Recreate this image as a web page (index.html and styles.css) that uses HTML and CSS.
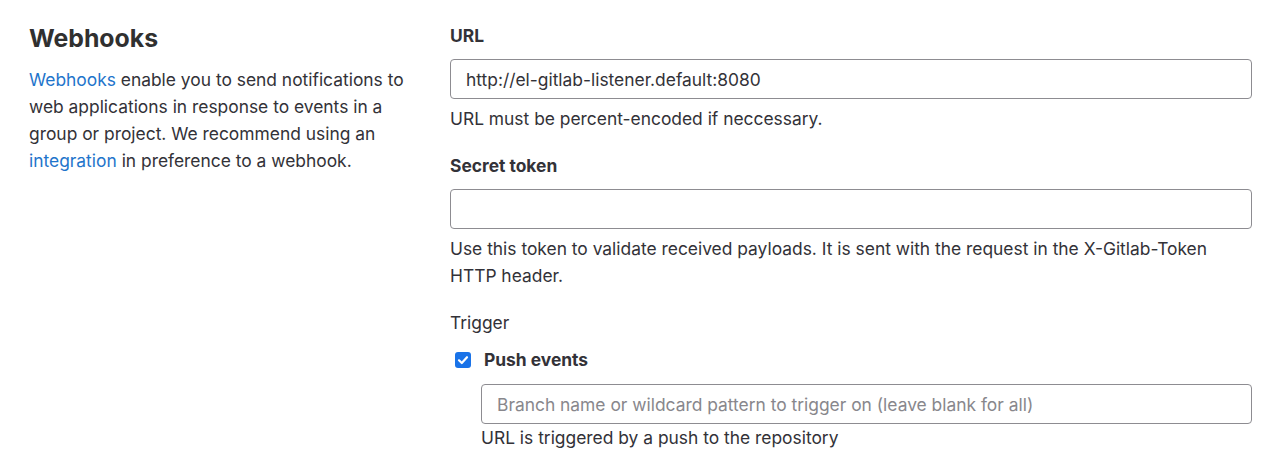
FILE: index.html
```html
<!DOCTYPE html>
<html lang="en">
<head>
<meta charset="utf-8">
<title>Webhooks</title>
<link rel="stylesheet" href="styles.css">
</head>
<body>
<div class="page">
  <section class="intro">
    <h2 class="title">Webhooks</h2>
    <p class="desc"><a href="#" class="link">Webhooks</a> enable you to send notifications to web applications in response to events in a group or project. We recommend using an <a href="#" class="link">integration</a> in preference to a webhook.</p>
  </section>
  <form class="form">
    <div class="group">
      <label class="label">URL</label>
      <div class="input"><span class="value">http://el-gitlab-listener.default:8080</span></div>
      <p class="help">URL must be percent-encoded if neccessary.</p>
    </div>
    <div class="group">
      <label class="label">Secret token</label>
      <div class="input"></div>
      <p class="help help-wrap">Use this token to validate received payloads. It is sent with the request in the X-Gitlab-Token HTTP header.</p>
    </div>
    <div class="group trigger">
      <div class="trigger-title">Trigger</div>
      <div class="check-row">
        <span class="checkbox"><svg width="16" height="16" viewBox="0 0 16 16"><path d="M4 8.3 L6.8 11 L12 5.2" fill="none" stroke="#fff" stroke-width="2.2" stroke-linecap="round" stroke-linejoin="round"/></svg></span>
        <span class="check-label">Push events</span>
      </div>
      <div class="sub">
        <div class="input"><span class="placeholder">Branch name or wildcard pattern to trigger on (leave blank for all)</span></div>
        <p class="help help-tight">URL is triggered by a push to the repository</p>
      </div>
    </div>
  </form>
</div>
</body>
</html>
```
FILE: styles.css
```css
* { box-sizing: border-box; }
html, body { margin: 0; padding: 0; background: #fff; }
body {
  font-family: Inter, "Liberation Sans", Arial, sans-serif;
  color: #333238;
  font-size: 17.4px;
}
.page {
  display: grid;
  grid-template-columns: 390px 803px;
  column-gap: 30px;
  padding: 20px 0 0 29px;
}
.title {
  margin: 0;
  font-size: 24.8px;
  line-height: 36px;
  font-weight: 700;
  color: #303030;
}
.desc {
  margin: 10px 0 0;
  line-height: 27px;
}
.link { color: #1f75cb; text-decoration: none; }
.form { padding-top: 3px; padding-left: 1px; }
.group { display: flex; flex-direction: column; }
.group + .group { margin-top: 21px; }
.label, .check-label {
  font-weight: 700;
  line-height: 26px;
}
.label { margin-bottom: 10px; }
.input {
  height: 40px;
  border: 1px solid #8d8c91;
  border-radius: 4px;
  display: flex;
  align-items: center;
  padding: 0 15px;
}
.value { color: #333238; }
.placeholder { color: #88878c; }
.help { margin: 7px 0 0; line-height: 26px; }
.help-wrap { margin-top: 6px; line-height: 27px; }
.help-tight { margin-top: 1px; }
.trigger { margin-top: 21px; }
.trigger-title { line-height: 26px; }
.check-row {
  display: flex;
  align-items: center;
  gap: 13px;
  margin: 11px 0 11px 5px;
}
.checkbox {
  width: 16px;
  height: 16px;
  border-radius: 3px;
  background: #1a73e8;
  display: flex;
}
.sub { padding-left: 31px; }
```
